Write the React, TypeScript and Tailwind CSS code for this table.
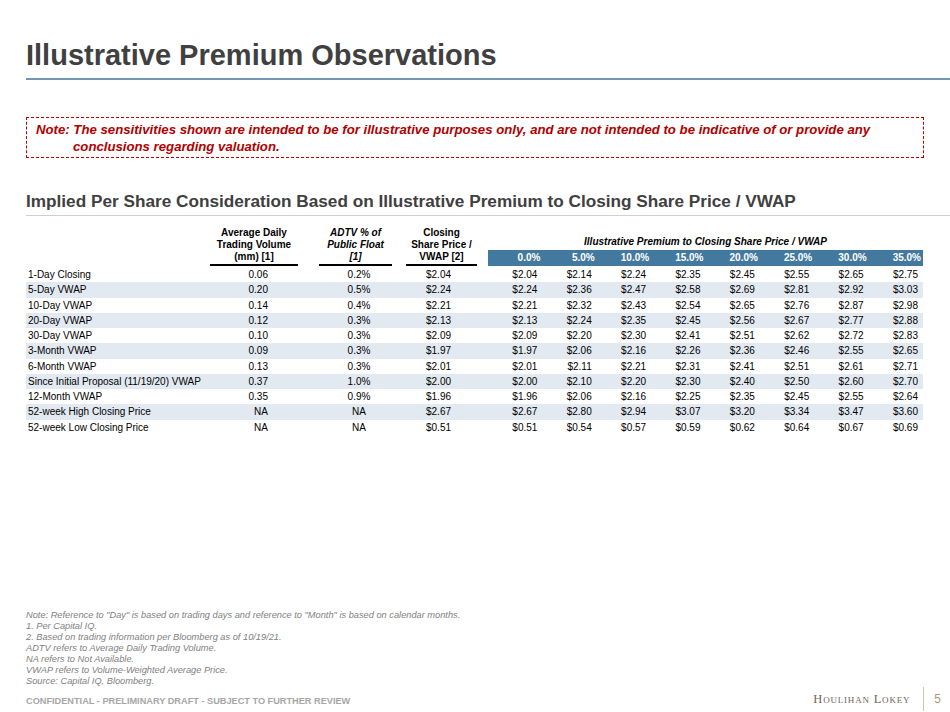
const rows: [string, string, string, string, string[]][] = [
  ['1-Day Closing', '0.06', '0.2%', '$2.04', ['$2.04', '$2.14', '$2.24', '$2.35', '$2.45', '$2.55', '$2.65', '$2.75']],
  ['5-Day VWAP', '0.20', '0.5%', '$2.24', ['$2.24', '$2.36', '$2.47', '$2.58', '$2.69', '$2.81', '$2.92', '$3.03']],
  ['10-Day VWAP', '0.14', '0.4%', '$2.21', ['$2.21', '$2.32', '$2.43', '$2.54', '$2.65', '$2.76', '$2.87', '$2.98']],
  ['20-Day VWAP', '0.12', '0.3%', '$2.13', ['$2.13', '$2.24', '$2.35', '$2.45', '$2.56', '$2.67', '$2.77', '$2.88']],
  ['30-Day VWAP', '0.10', '0.3%', '$2.09', ['$2.09', '$2.20', '$2.30', '$2.41', '$2.51', '$2.62', '$2.72', '$2.83']],
  ['3-Month VWAP', '0.09', '0.3%', '$1.97', ['$1.97', '$2.06', '$2.16', '$2.26', '$2.36', '$2.46', '$2.55', '$2.65']],
  ['6-Month VWAP', '0.13', '0.3%', '$2.01', ['$2.01', '$2.11', '$2.21', '$2.31', '$2.41', '$2.51', '$2.61', '$2.71']],
  ['Since Initial Proposal (11/19/20) VWAP', '0.37', '1.0%', '$2.00', ['$2.00', '$2.10', '$2.20', '$2.30', '$2.40', '$2.50', '$2.60', '$2.70']],
  ['12-Month VWAP', '0.35', '0.9%', '$1.96', ['$1.96', '$2.06', '$2.16', '$2.25', '$2.35', '$2.45', '$2.55', '$2.64']],
  ['52-week High Closing Price', 'NA', 'NA', '$2.67', ['$2.67', '$2.80', '$2.94', '$3.07', '$3.20', '$3.34', '$3.47', '$3.60']],
  ['52-week Low Closing Price', 'NA', 'NA', '$0.51', ['$0.51', '$0.54', '$0.57', '$0.59', '$0.62', '$0.64', '$0.67', '$0.69']],
];

const premiums = ['0.0%', '5.0%', '10.0%', '15.0%', '20.0%', '25.0%', '30.0%', '35.0%'];

const notes = [
  'Note: Reference to "Day" is based on trading days and reference to "Month" is based on calendar months.',
  '1. Per Capital IQ.',
  '2. Based on trading information per Bloomberg as of 10/19/21.',
  'ADTV refers to Average Daily Trading Volume.',
  'NA refers to Not Available.',
  'VWAP refers to Volume-Weighted Average Price.',
  'Source: Capital IQ, Bloomberg.',
];

const narrow = "font-['Liberation_Sans_Narrow','Arial_Narrow','Liberation_Sans',sans-serif]";

export default function App() {
  return (
    <div className="w-[950px] h-[712px] bg-white flex flex-col font-['Liberation_Sans',Arial,sans-serif] text-black overflow-hidden">
      {/* title */}
      <h1 className="mt-[39px] ml-[26px] text-[29px] leading-[33px] font-bold text-[#404040]">
        Illustrative Premium Observations
      </h1>
      <div className="mt-[6px] ml-[26px] h-[2px] bg-[#6f97b8]" />

      {/* disclaimer */}
      <div className={`mt-[37px] ml-[26px] w-[898px] h-[41px] border border-dashed border-[#c00000] pl-[9px] pt-[3px] text-[13.2px] leading-[17px] font-bold italic text-[#b00000] ${narrow}`}>
        <p>Note: The sensitivities shown are intended to be for illustrative purposes only, and are not intended to be indicative of or provide any</p>
        <p className="pl-[37px]">conclusions regarding valuation.</p>
      </div>

      {/* section heading */}
      <h2 className={`mt-[33px] ml-[26px] text-[17.2px] leading-[20px] font-bold text-[#404040] ${narrow}`}>
        Implied Per Share Consideration Based on Illustrative Premium to Closing Share Price / VWAP
      </h2>
      <div className="mt-[4px] ml-[26px] h-px bg-[#cfcfcf]" />

      {/* table */}
      <div className="ml-[26px] mt-[11px] w-[897px] text-[10px]">
        <div className="flex items-end font-bold leading-[12px]">
          <div className="w-[184px]" />
          <div className="w-[88px] text-center border-b-2 border-black pb-px">
            Average Daily<br />Trading Volume<br />(mm) [1]
          </div>
          <div className="ml-[21px] w-[73px] text-center italic border-b-2 border-black pb-px">
            ADTV % of<br />Public Float<br />[1]
          </div>
          <div className="ml-[14px] w-[71px] text-center border-b-2 border-black pb-px">
            Closing<br />Share Price /<br />VWAP [2]
          </div>
          <div className="ml-[11px] w-[435px]">
            <div className="text-center italic pb-[2px]">Illustrative Premium to Closing Share Price / VWAP</div>
            <div className="flex h-[16px] items-center bg-[#43799e] text-white">
              {premiums.map((p) => (
                <div key={p} className="w-[54.375px] text-right pr-[2px]">{p}</div>
              ))}
            </div>
          </div>
        </div>

        <div className="mt-[1px]">
          {rows.map((r, i) => (
            <div key={r[0]} className={`flex items-center h-[15.26px] ${i % 2 === 1 ? 'bg-[#e2e9f0]' : ''}`}>
              <div className="w-[184px] pl-[2px] whitespace-nowrap">{r[0]}</div>
              <div className="w-[88px] text-right pr-[30px]">{r[1]}</div>
              <div className="ml-[21px] w-[73px] text-center pl-[7px]">{r[2]}</div>
              <div className="ml-[14px] w-[71px] text-center pr-[6px]">{r[3]}</div>
              <div className="ml-[11px] flex">
                {r[4].map((v, j) => (
                  <div key={j} className="w-[54.375px] text-right pr-[5px]">{v}</div>
                ))}
              </div>
            </div>
          ))}
        </div>
      </div>

      {/* footnotes */}
      <div className="mt-auto ml-[26px] text-[9.25px] leading-[11px] italic text-[#808080]">
        {notes.map((n) => (
          <p key={n}>{n}</p>
        ))}
      </div>

      <div className="mb-[1px] ml-[26px] flex items-center h-[24px]">
        <span className="self-end pb-[4px] text-[9.2px] leading-[11px] font-bold text-[#a6a6a6]">
          CONFIDENTIAL - PRELIMINARY DRAFT - SUBJECT TO FURTHER REVIEW
        </span>
        <span className="ml-auto font-['Liberation_Serif',serif] text-[12.5px] [font-variant:small-caps] tracking-[0.8px] text-[#6f665a]">
          Houlihan Lokey
        </span>
        <div className="ml-[13px] w-px h-[24px] bg-[#cdc3b3]" />
        <span className="ml-[10px] mr-[9px] text-[12px] text-[#a99876]">5</span>
      </div>
    </div>
  );
}
